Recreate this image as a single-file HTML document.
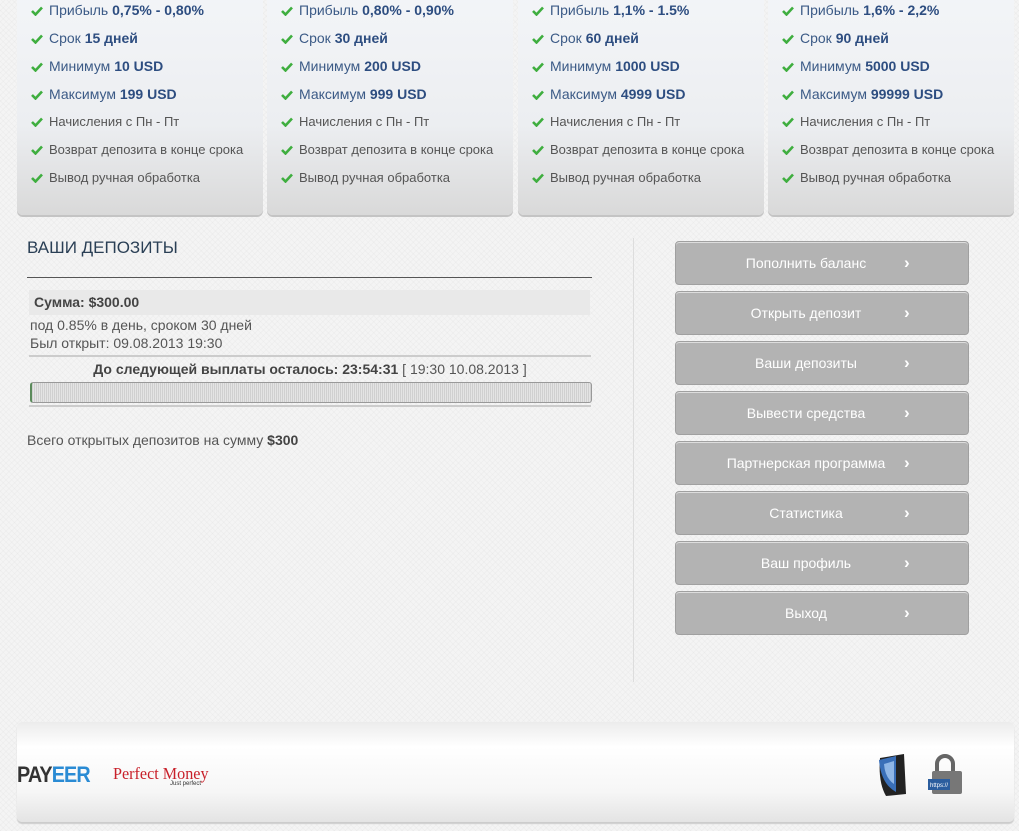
<!DOCTYPE html>
<html><head><meta charset="utf-8"><style>
body{margin:0;width:1019px;height:831px;overflow:hidden;background:#f4f4f4;font-family:"Liberation Sans",Arial,sans-serif;position:relative;
background-image:repeating-linear-gradient(45deg,rgba(0,0,0,.02) 0 1px,transparent 1px 4px),repeating-linear-gradient(-45deg,rgba(0,0,0,.02) 0 1px,transparent 1px 4px);}
.card{position:absolute;top:-10px;width:246px;height:225px;border-radius:6px;background:linear-gradient(#f3f5f8 0%,#eceef1 60%,#d9d9d9 100%);box-shadow:0 2px 0 #c4c4c4}
.row{position:absolute;left:14px;font-size:13px;color:#555;white-space:nowrap}
.row.b{color:#3b5a86;font-size:14px}
.row.b b{color:#2d4d80}
.ck{display:inline-block;width:12px;height:10px;margin-right:6px;vertical-align:-1px}
.btn{position:absolute;left:675px;width:292px;height:42px;background:#b3b3b3;border:1px solid #a0a0a0;border-radius:4px;box-shadow:inset 0 1px 0 #ddd;color:#fff;font-size:14px;line-height:42px;text-align:center}
.btn span.a{position:absolute;left:228px;font-weight:bold;font-size:17px}
.btn span.t{position:relative;left:-16px}
</style></head><body>
<div class="card" style="left:17px"></div>
<div class="card" style="left:267px"></div>
<div class="card" style="left:518px"></div>
<div class="card" style="left:768px"></div>
<div id="cards"></div>

<div style="position:absolute;left:27px;top:238px;font-size:17px;color:#2a3f55">ВАШИ ДЕПОЗИТЫ</div>
<div style="position:absolute;left:27px;top:277px;width:565px;height:1px;background:#555"></div>
<div style="position:absolute;left:29px;top:290px;width:561px;height:25px;background:#e9e9e9;font-size:14px;font-weight:bold;color:#444;line-height:25px;text-indent:5px">Сумма: $300.00</div>
<div style="position:absolute;left:30px;top:316px;font-size:14px;color:#555;line-height:18px">под 0.85% в день, сроком 30 дней<br>Был открыт: 09.08.2013 19:30</div>
<div style="position:absolute;left:29px;top:355px;width:562px;height:2px;background:#ccc"></div>
<div style="position:absolute;left:29px;top:361px;width:562px;text-align:center;font-size:14px;color:#555"><b style="color:#444">До следующей выплаты осталось: 23:54:31</b> [ 19:30 10.08.2013 ]</div>
<div style="position:absolute;left:30px;top:382px;width:559px;height:19px;border:1px solid #999;border-radius:3px;background:repeating-linear-gradient(90deg,#d0d0d0 0 1px,#e4e4e4 1px 2px);border-left:2px solid #5a8a5a"></div>
<div style="position:absolute;left:29px;top:405px;width:562px;height:2px;background:#ccc"></div>
<div style="position:absolute;left:27px;top:432px;font-size:14px;color:#555">Всего открытых депозитов на сумму <b style="color:#444">$300</b></div>

<div style="position:absolute;left:633px;top:238px;width:1px;height:444px;background:#ddd"></div>

<div class="btn" style="top:241px"><span class="t">Пополнить баланс</span><span class="a">›</span></div>
<div class="btn" style="top:291px"><span class="t">Открыть депозит</span><span class="a">›</span></div>
<div class="btn" style="top:341px"><span class="t">Ваши депозиты</span><span class="a">›</span></div>
<div class="btn" style="top:391px"><span class="t">Вывести средства</span><span class="a">›</span></div>
<div class="btn" style="top:441px"><span class="t">Партнерская программа</span><span class="a">›</span></div>
<div class="btn" style="top:491px"><span class="t">Статистика</span><span class="a">›</span></div>
<div class="btn" style="top:541px"><span class="t">Ваш профиль</span><span class="a">›</span></div>
<div class="btn" style="top:591px"><span class="t">Выход</span><span class="a">›</span></div>

<div style="position:absolute;left:17px;top:722px;width:997px;height:100px;border-radius:5px;background:linear-gradient(#ececec,#fff 25%,#f6f6f6 70%,#e4e4e4);box-shadow:0 2px 1px #ccc"></div>
<div style="position:absolute;left:17px;top:762px;font-size:22px;font-weight:bold;color:#333;letter-spacing:-1px;transform:scaleX(.9);transform-origin:left">PAY<span style="color:#2a8bd4">EER</span></div>
<div style="position:absolute;left:113px;top:764px;font-family:'Liberation Serif',serif;font-size:17px;color:#c8202a;transform:scaleX(.95);transform-origin:left">Perfect Money</div>
<div style="position:absolute;left:170px;top:781px;font-size:6px;color:#333">Just perfect</div>
<svg style="position:absolute;left:876px;top:752px" width="34" height="46"><path d="M4 6 L28 2 L30 42 L10 44 Q2 30 4 6Z" fill="#222"/><path d="M3 8 L20 4 L20 40 Q5 32 3 8Z" fill="#3a6fb8"/><path d="M8 12 L18 9 L18 32 Q9 26 8 12Z" fill="#8fb6e6"/></svg>
<svg style="position:absolute;left:926px;top:752px" width="38" height="44"><path d="M11 20 V12 a8 8 0 0 1 16 0 V20" stroke="#666" stroke-width="4" fill="none"/><rect x="6" y="19" width="30" height="23" rx="2" fill="#777"/><rect x="2" y="27" width="22" height="11" fill="#2b5d9e"/><text x="4" y="35" font-size="6" fill="#fff" font-family="Liberation Sans">https://</text></svg>

<script>
var d=[["0,75% - 0,80%","15 дней","10 USD","199 USD"],["0,80% - 0,90%","30 дней","200 USD","999 USD"],["1,1% - 1.5%","60 дней","1000 USD","4999 USD"],["1,6% - 2,2%","90 дней","5000 USD","99999 USD"]];
var L=[17,267,518,768],h="";
var ck='<svg class="ck" viewBox="0 0 12 10"><path d="M1 5 L4.5 8.5 L11 1.5" stroke="#3fae3f" stroke-width="2.6" fill="none"/></svg>';
d.forEach(function(c,i){var x=L[i];var lab=["Прибыль ","Срок ","Минимум ","Максимум "];
for(var j=0;j<4;j++)h+='<div class="row b" style="left:'+(x+14)+'px;top:'+(2+28*j)+'px">'+ck+lab[j]+'<b>'+c[j]+'</b></div>';
["Начисления с Пн - Пт","Возврат депозита в конце срока","Вывод ручная обработка"].forEach(function(t,k){h+='<div class="row" style="left:'+(x+14)+'px;top:'+(114+28*k)+'px">'+ck+t+'</div>';});});
document.getElementById("cards").innerHTML=h;
</script>
</body></html>
